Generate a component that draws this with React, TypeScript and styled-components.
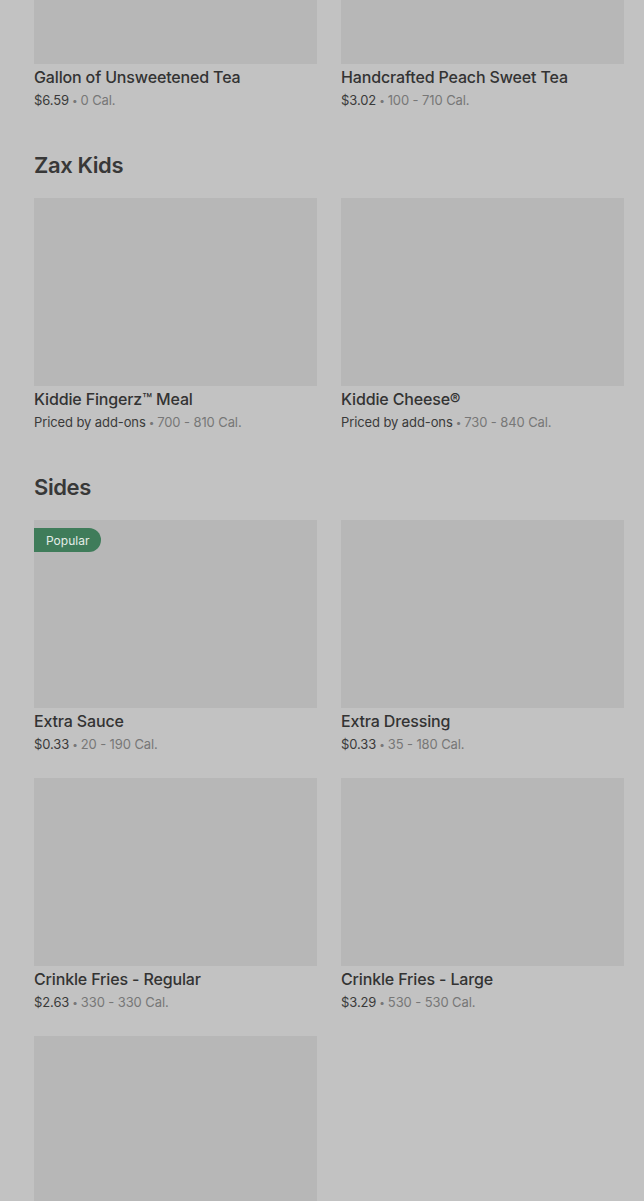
import React from "react";
import styled, { createGlobalStyle } from "styled-components";

const Global = createGlobalStyle`
  html, body { margin: 0; padding: 0; background: #c2c2c2; }
  body { font-family: Inter, "Noto Sans", sans-serif; overflow: hidden; }
`;

const Page = styled.div`
  margin-top: -124px;
  padding: 0 20px 0 34px;
  height: 1325px;
  overflow: hidden;
`;

const Section = styled.section`
  & + & { margin-top: 39px; }
`;

const Heading = styled.h2`
  margin: 0 0 17px;
  font-size: 22px;
  line-height: 32px;
  font-weight: 600;
  color: #383838;
  letter-spacing: -0.4px;
`;

const Grid = styled.div`
  display: grid;
  grid-template-columns: 283px 283px;
  column-gap: 24px;
  row-gap: 24px;
`;

const Card = styled.div`
  display: flex;
  flex-direction: column;
`;

const Thumb = styled.div`
  position: relative;
  height: 188px;
  background: #b7b7b7;
`;

const Badge = styled.span`
  position: absolute;
  top: 8px;
  left: 0;
  height: 24px;
  padding: 0 12px;
  display: flex;
  align-items: center;
  background: #3f7c5a;
  color: #e4ece7;
  font-size: 12px;
  border-radius: 0 12px 12px 0;
`;

const Title = styled.div`
  margin-top: 3px;
  font-size: 16px;
  line-height: 20px;
  font-weight: 500;
  color: #333333;
  letter-spacing: -0.15px;
`;

const Meta = styled.div`
  margin-top: 3px;
  height: 20px;
  font-size: 13px;
  line-height: 20px;
  color: #3a3a3a;
  letter-spacing: -0.1px;
`;

const Cal = styled.span`
  color: #777777;
`;

const Dot = styled.span`
  font-size: 10px;
  line-height: 0;
  vertical-align: 1px;
  margin: 0 3px;
`;

type Item = { name?: string; price?: string; cal?: string; popular?: boolean };

const ItemCard = ({ item }: { item: Item }) => (
  <Card>
    <Thumb>{item.popular && <Badge>Popular</Badge>}</Thumb>
    {item.name && <Title>{item.name}</Title>}
    {item.price && (
      <Meta>
        {item.price}
        <Cal>
          <Dot>•</Dot>
          {item.cal}
        </Cal>
      </Meta>
    )}
  </Card>
);

const sections: { title?: string; items: Item[] }[] = [
  {
    items: [
      { name: "Gallon of Unsweetened Tea", price: "$6.59", cal: "0 Cal." },
      { name: "Handcrafted Peach Sweet Tea", price: "$3.02", cal: "100 - 710 Cal." },
    ],
  },
  {
    title: "Zax Kids",
    items: [
      { name: "Kiddie Fingerz™ Meal", price: "Priced by add-ons", cal: "700 - 810 Cal." },
      { name: "Kiddie Cheese®", price: "Priced by add-ons", cal: "730 - 840 Cal." },
    ],
  },
  {
    title: "Sides",
    items: [
      { name: "Extra Sauce", price: "$0.33", cal: "20 - 190 Cal.", popular: true },
      { name: "Extra Dressing", price: "$0.33", cal: "35 - 180 Cal." },
      { name: "Crinkle Fries - Regular", price: "$2.63", cal: "330 - 330 Cal." },
      { name: "Crinkle Fries - Large", price: "$3.29", cal: "530 - 530 Cal." },
      {},
    ],
  },
];

export default function App() {
  return (
    <>
      <Global />
      <Page>
        {sections.map((s, i) => (
          <Section key={i}>
            {s.title && <Heading>{s.title}</Heading>}
            <Grid>
              {s.items.map((it, j) => (
                <ItemCard key={j} item={it} />
              ))}
            </Grid>
          </Section>
        ))}
      </Page>
    </>
  );
}
